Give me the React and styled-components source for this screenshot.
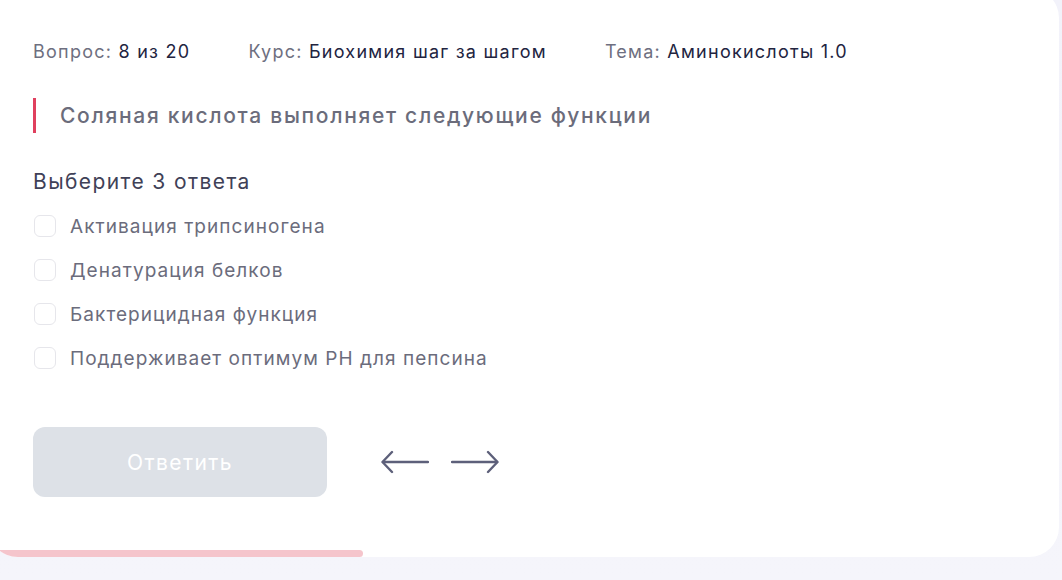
import React from "react";
import styled, { createGlobalStyle } from "styled-components";

const Global = createGlobalStyle`
  html, body { margin: 0; padding: 0; }
  body {
    background: linear-gradient(180deg, #f2f2fa 0%, #f5f5fb 100%);
    font-family: "Inter", "Roboto", sans-serif;
    overflow: hidden;
  }
`;

const Page = styled.div`
  width: 1062px;
  height: 580px;
  overflow: hidden;
`;

const Card = styled.section`
  width: 1071px;
  margin-left: -12px;
  margin-top: -12px;
  background: #fff;
  border-radius: 30px;
  overflow: hidden;
  display: flex;
  flex-direction: column;
  padding-top: 52px;
  box-sizing: border-box;
`;

const Body = styled.div`
  padding-left: 45px;
  display: flex;
  flex-direction: column;
`;

const Meta = styled.div`
  display: flex;
  gap: 58px;
  font-size: 18px;
  letter-spacing: 1.25px;
  line-height: 24px;
`;

const MetaItem = styled.span`
  color: #22243f;
  white-space: nowrap;
  & > b {
    font-weight: 400;
    color: #6e6f80;
  }
`;

const Question = styled.h2`
  margin: 34px 0 0;
  border-left: 3px solid #e0405e;
  padding-left: 24px;
  height: 35px;
  display: flex;
  align-items: center;
  font-size: 21px;
  letter-spacing: 1.7px;
  font-weight: 500;
  color: #6b6c7b;
  white-space: nowrap;
`;

const Prompt = styled.div`
  margin-top: 35px;
  font-size: 21px;
  letter-spacing: 1.4px;
  line-height: 28px;
  color: #3f4157;
`;

const Options = styled.div`
  margin-top: 18px;
  display: flex;
  flex-direction: column;
  gap: 20px;
`;

const Option = styled.label`
  display: flex;
  align-items: center;
  gap: 14px;
  height: 24px;
  font-size: 19px;
  letter-spacing: 1.05px;
  color: #6b6c7c;
  white-space: nowrap;
`;

const Box = styled.span`
  width: 20px;
  height: 20px;
  border: 1px solid #e6e6eb;
  border-radius: 6px;
  margin-left: 1px;
  flex: none;
`;

const Actions = styled.div`
  margin-top: 57px;
  display: flex;
  align-items: center;
`;

const AnswerButton = styled.button`
  width: 294px;
  height: 70px;
  border: none;
  border-radius: 12px;
  background: #dde1e7;
  color: #fff;
  font-family: inherit;
  font-size: 21px;
  letter-spacing: 1.4px;
  margin-right: 54px;
`;

const Nav = styled.div`
  display: flex;
  gap: 22px;
  color: #5d607a;
`;

const Progress = styled.div`
  margin-top: 53px;
  height: 7px;
  background: #f5c5cc;
  border-radius: 0 4px 4px 0;
`;

const Arrow = ({ dir }) => (
  <svg width="48" height="24" viewBox="0 0 48 24" fill="none" stroke="currentColor" strokeWidth="2.4" strokeLinecap="round" strokeLinejoin="round">
    {dir === "left" ? (
      <>
        <path d="M2 12 H47" />
        <path d="M11 2 L1.5 12 L11 22" />
      </>
    ) : (
      <>
        <path d="M1 12 H46" />
        <path d="M37 2 L46.5 12 L37 22" />
      </>
    )}
  </svg>
);

const options = [
  "Активация трипсиногена",
  "Денатурация белков",
  "Бактерицидная функция",
  "Поддерживает оптимум РН для пепсина",
];

export default function App() {
  return (
    <Page>
      <Global />
      <Card>
        <Body>
          <Meta>
            <MetaItem><b>Вопрос:</b> 8 из 20</MetaItem>
            <MetaItem><b>Курс:</b> Биохимия шаг за шагом</MetaItem>
            <MetaItem><b>Тема:</b> Аминокислоты 1.0</MetaItem>
          </Meta>
          <Question>Соляная кислота выполняет следующие функции</Question>
          <Prompt>Выберите 3 ответа</Prompt>
          <Options>
            {options.map((o) => (
              <Option key={o}>
                <Box />
                {o}
              </Option>
            ))}
          </Options>
          <Actions>
            <AnswerButton>Ответить</AnswerButton>
            <Nav>
              <Arrow dir="left" />
              <Arrow dir="right" />
            </Nav>
          </Actions>
        </Body>
        <Progress style={{ width: "375px" }} />
      </Card>
    </Page>
  );
}
